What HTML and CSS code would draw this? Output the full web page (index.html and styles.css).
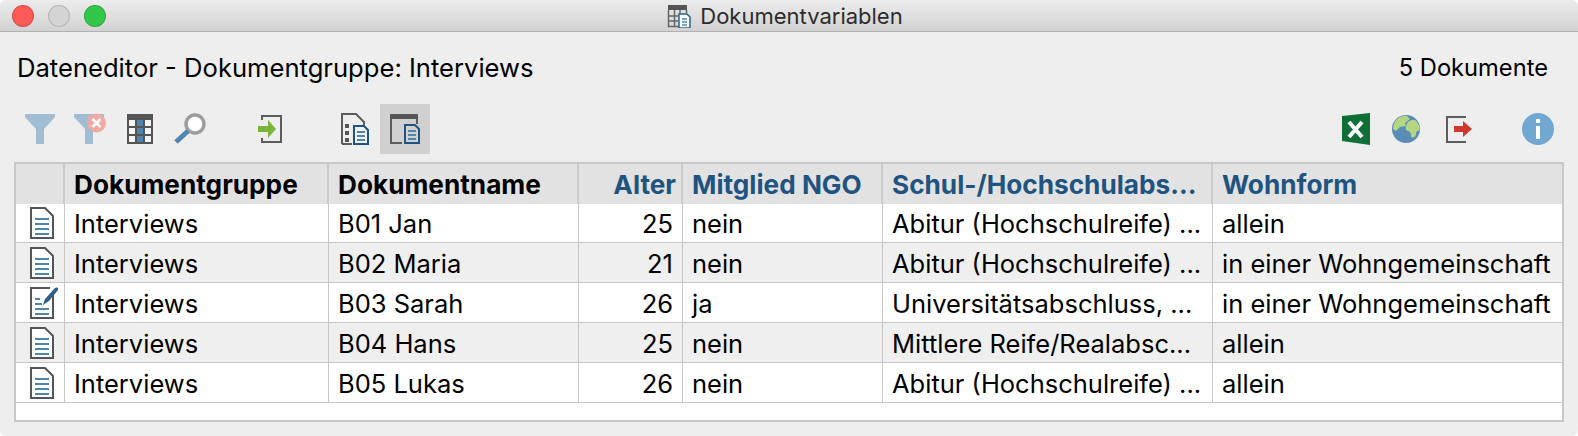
FILE: index.html
```html
<!doctype html>
<html lang="de">
<head>
    <meta charset="UTF-8">
    <title>Dokumentvariablen</title>
    <link rel="stylesheet" href="styles.css">
</head>
<body>
    <svg class="defs" width="0" height="0">
        <symbol id="doc" viewBox="0 0 24 32">
            <path d="M1 1H15L23 9V31H1Z" fill="#fff" stroke="#555" stroke-width="2"/>
            <path d="M5 12H19M5 17H19M5 22H19M5 27H19" stroke="#4f86b0" stroke-width="2"/>
        </symbol>
        <symbol id="doc-edit" viewBox="0 0 30 32">
            <path d="M23 8V31H1V1H20" fill="#fff" stroke="#555" stroke-width="2"/>
            <path d="M5 12H10M5 17H12M5 22H19M5 27H19" stroke="#4f86b0" stroke-width="2"/>
            <path d="M13 18L15 12L24 2C26 0 29 0 28 3L19 14Z" fill="#2f5d8a"/>
        </symbol>
    </svg>
    <div class="window">
        <div class="titlebar">
            <div class="lights">
                <span class="light red"></span>
                <span class="light grey"></span>
                <span class="light green"></span>
            </div>
            <div class="title">
                <svg width="24" height="24" viewBox="0 0 24 24">
                    <path d="M1 1H20V6H1Z" fill="#555"/>
                    <path d="M1.5 6V22.5H13M7.500 6V22M13 6V10M1 12H11M1 17H11M19.500 6V9" fill="none" stroke="#666" stroke-width="1.500"/>
                    <path d="M12 10H20L23 13V24H12Z" fill="#fff" stroke="#2b6190" stroke-width="1.500"/>
                    <path d="M15 15H20M15 18H20M15 21H20" stroke="#4f86b0" stroke-width="1.500"/>
                </svg>
                Dokumentvariablen
            </div>
        </div>
        <div class="content">
            <div class="info">
                <span>Dateneditor - Dokumentgruppe: Interviews</span>
                <span class="count">5 Dokumente</span>
            </div>
            <div class="toolbar">
                <div class="group">
                    <div class="tool">
                        <svg width="30" height="30" viewBox="0 0 30 30"><path d="M0 0H30V3L19 15V30H11V15L0 3Z" fill="#a0bdd3"/></svg>
                    </div>
                    <div class="tool">
                        <svg width="32" height="32" viewBox="0 0 32 32"><path d="M0 1H30V4L19 16V31H11V16L0 4Z" fill="#a0bdd3"/><circle cx="22.500" cy="10" r="9.500" fill="#f0aaa5"/><path d="M18.500 6L26.500 14M26.500 6L18.500 14" stroke="#fff" stroke-width="2.500"/></svg>
                    </div>
                    <div class="tool">
                        <svg width="26" height="30" viewBox="0 0 26 30">
                            <rect width="26" height="30" fill="#555"/>
                            <path d="M2 6H8V12H2ZM18 6H24V12H18ZM2 14H8V20H2ZM18 14H24V20H18ZM2 22H8V28H2ZM18 22H24V28H18Z" fill="#f4f4f4"/>
                            <path d="M10 6H16V12H10ZM10 14H16V20H10ZM10 22H16V28H10Z" fill="#4f86b0"/>
                        </svg>
                    </div>
                    <div class="tool">
                        <svg width="32" height="32" viewBox="0 0 32 32">
                            <circle cx="21" cy="11" r="9" fill="#fff" stroke="#9c9c9c" stroke-width="3.500"/>
                            <path d="M14 18L2 29" stroke="#4f86b0" stroke-width="5"/>
                        </svg>
                    </div>
                </div>
                <div class="group group-import">
                    <div class="tool">
                        <svg width="24" height="30" viewBox="0 0 24 30">
                            <path d="M4 6V2H23V28H4V24" fill="none" stroke="#5c5c5c" stroke-width="2"/>
                            <path d="M0 12H10V6L18 15L10 24V18H0Z" fill="#79b53c"/>
                        </svg>
                    </div>
                </div>
                <div class="group group-view">
                    <div class="tool">
                        <svg width="28" height="32" viewBox="0 0 28 32">
                            <path d="M1 31V1H15L23 9V14" fill="none" stroke="#5c5c5c" stroke-width="2"/>
                            <path d="M1 31H11" stroke="#5c5c5c" stroke-width="2"/>
                            <path d="M4 11H8V15H4ZM4 18H8V22H4ZM4 25H8V29H4Z" fill="#555"/>
                            <path d="M13 13H23L27 17V31H13Z" fill="#f2f2f2" stroke="#1f5480" stroke-width="2"/>
                            <path d="M16 19H24M16 23H24M16 27H24" stroke="#4f86b0" stroke-width="2"/>
                        </svg>
                    </div>
                    <div class="tool active">
                        <svg width="30" height="30" viewBox="0 0 30 30">
                            <path d="M0 0H28V5H0Z" fill="#555"/>
                            <path d="M1 5V29H12M27 5V10" fill="none" stroke="#5c5c5c" stroke-width="2"/>
                            <path d="M15 11H25L29 15V29H15Z" fill="#d0d0d0" stroke="#1f5480" stroke-width="2"/>
                            <path d="M18 17H26M18 21H26M18 25H26" stroke="#4f86b0" stroke-width="2"/>
                        </svg>
                    </div>
                </div>
                <div class="group group-right">
                    <div class="tool">
                        <svg width="28" height="32" viewBox="0 0 28 32">
                            <path d="M0 3L28 0V32L0 28Z" fill="#0e7037"/>
                            <path d="M7 9L20 24M20 9L7 24" stroke="#fff" stroke-width="4"/>
                        </svg>
                    </div>
                    <div class="tool">
                        <svg width="28" height="28" viewBox="0 0 28 28">
                            <circle cx="14" cy="14" r="14" fill="#5a8db5"/>
                            <path d="M5 4C8 1 12 0 15 1L18 4L13 8L14 11L8 12L4 16L1 14C1 10 3 6 5 4ZM16 7C20 4 23 4 25 7C28 11 28 14 27 16C25 15 24 17 24 20C22 23 20 24 19 21C20 18 17 16 14 15C13 12 15 9 16 7Z" fill="#b3d684"/>
                        </svg>
                    </div>
                    <div class="tool tool-export">
                        <svg width="26" height="28" viewBox="0 0 26 28">
                            <path d="M20 2H1V27H20" fill="none" stroke="#5c5c5c" stroke-width="2"/>
                            <path d="M8 11H17V6L26 14L17 22V17H8Z" fill="#cf3a2e"/>
                        </svg>
                    </div>
                    <div class="tool tool-info">
                        <svg width="32" height="32" viewBox="0 0 32 32">
                            <circle cx="16" cy="16" r="16" fill="#72a7d2"/>
                            <path d="M14 6H18V10H14ZM14 13H18V26H14Z" fill="#fff"/>
                        </svg>
                    </div>
                </div>
            </div>
            <div class="table">
                <div class="row head">
                    <div class="cell"></div>
                    <div class="cell">Dokumentgruppe</div>
                    <div class="cell">Dokumentname</div>
                    <div class="cell num var">Alter</div>
                    <div class="cell var">Mitglied NGO</div>
                    <div class="cell var">Schul-/Hochschulabs...</div>
                    <div class="cell var">Wohnform</div>
                </div>
                <div class="row">
                    <div class="cell icon"><svg width="24" height="32"><use href="#doc"/></svg></div>
                    <div class="cell">Interviews</div>
                    <div class="cell">B01 Jan</div>
                    <div class="cell num">25</div>
                    <div class="cell">nein</div>
                    <div class="cell">Abitur (Hochschulreife) ...</div>
                    <div class="cell">allein</div>
                </div>
                <div class="row">
                    <div class="cell icon"><svg width="24" height="32"><use href="#doc"/></svg></div>
                    <div class="cell">Interviews</div>
                    <div class="cell">B02 Maria</div>
                    <div class="cell num">21</div>
                    <div class="cell">nein</div>
                    <div class="cell">Abitur (Hochschulreife) ...</div>
                    <div class="cell">in einer Wohngemeinschaft</div>
                </div>
                <div class="row">
                    <div class="cell icon"><svg class="edit" width="30" height="32"><use href="#doc-edit"/></svg></div>
                    <div class="cell">Interviews</div>
                    <div class="cell">B03 Sarah</div>
                    <div class="cell num">26</div>
                    <div class="cell">ja</div>
                    <div class="cell">Universitätsabschluss, ...</div>
                    <div class="cell">in einer Wohngemeinschaft</div>
                </div>
                <div class="row">
                    <div class="cell icon"><svg width="24" height="32"><use href="#doc"/></svg></div>
                    <div class="cell">Interviews</div>
                    <div class="cell">B04 Hans</div>
                    <div class="cell num">25</div>
                    <div class="cell">nein</div>
                    <div class="cell">Mittlere Reife/Realabsc...</div>
                    <div class="cell">allein</div>
                </div>
                <div class="row">
                    <div class="cell icon"><svg width="24" height="32"><use href="#doc"/></svg></div>
                    <div class="cell">Interviews</div>
                    <div class="cell">B05 Lukas</div>
                    <div class="cell num">26</div>
                    <div class="cell">nein</div>
                    <div class="cell">Abitur (Hochschulreife) ...</div>
                    <div class="cell">allein</div>
                </div>
            </div>
        </div>
    </div>
</body>
</html>
```

FILE: styles.css
```css
*{
    margin: 0;
    padding: 0;
    box-sizing: border-box;
}
html,body{
    width: 100%;
    height: 100%;
    overflow: hidden;
    background: #fff;
}
body{
    font-family: Inter, "Liberation Sans", sans-serif;
    color: #000;
}
.defs{
    display: block;
    height: 0;
}
.window{
    height: 436px;
    background: #eee;
    border-radius: 6px;
    overflow: hidden;
}
.titlebar{
    display: flex;
    align-items: center;
    justify-content: center;
    position: relative;
    height: 32px;
    padding-right: 8px;
    background: linear-gradient(#ececec, #d2d2d2);
    border-bottom: 1px solid #b1b1b1;
}
.lights{
    position: absolute;
    left: 12px;
    top: 5px;
    display: flex;
    gap: 14px;
}
.light{
    width: 22px;
    height: 22px;
    border-radius: 50%;
    border: 1px solid rgba(0,0,0,.14);
}
.red{ background: #fc5b57; }
.grey{ background: #d4d4d4; }
.green{ background: #33c748; }
.title{
    display: flex;
    align-items: center;
    gap: 9px;
    font-size: 22px;
    color: #2c2c2c;
}
.content{
    padding: 0 14px;
}
.info{
    display: flex;
    align-items: center;
    justify-content: space-between;
    height: 72px;
    padding: 0 16px 2px 3px;
    font-size: 25.600px;
}
.count{
    font-size: 23.700px;
}
.toolbar{
    display: flex;
    height: 50px;
    margin-bottom: 8px;
}
.group{
    display: flex;
    margin-left: 1px;
}
.group-import{
    margin-left: 30px;
}
.group-view{
    margin-left: 35px;
}
.group-right{
    margin-left: auto;
    margin-right: 1px;
}
.tool{
    display: flex;
    align-items: center;
    justify-content: center;
    width: 50px;
    height: 50px;
}
.active{
    background: #d0d0d0;
}
.tool-export{
    padding-left: 6px;
}
.tool-info{
    margin-left: 32px;
}
.table{
    height: 260px;
    background: #fff;
    border: 2px solid #c8c8c8;
}
.row{
    display: grid;
    grid-template-columns: 49px 264px 250px 104px 200px 330px 349px;
    height: 40px;
    border-bottom: 1px solid #c6c6c6;
    font-size: 25.500px;
}
.row:nth-child(2){
    height: 39px;
}
.row:nth-child(odd){
    background: #efefef;
}
.row.head{
    height: 40px;
    background: #e2e2e2;
    border-bottom: 0;
    font-weight: 700;
    font-size: 26.200px;
}
.cell{
    display: flex;
    align-items: center;
    padding: 1px 9px 0 9px;
    border-right: 1px solid #c6c6c6;
    white-space: nowrap;
    overflow: hidden;
}
.cell:last-child{
    border-right: 0;
}
.head .cell{
    padding: 0 5px 0 9px;
    border-right: 2px solid #cbcbcb;
}
.head .cell:last-child{
    border-right: 0;
}
.num{
    justify-content: flex-end;
}
.var{
    color: #1f5480;
}
.cell.icon{
    justify-content: flex-start;
    padding: 0 0 0 14px;
}
.edit{
    flex: none;
}
```
